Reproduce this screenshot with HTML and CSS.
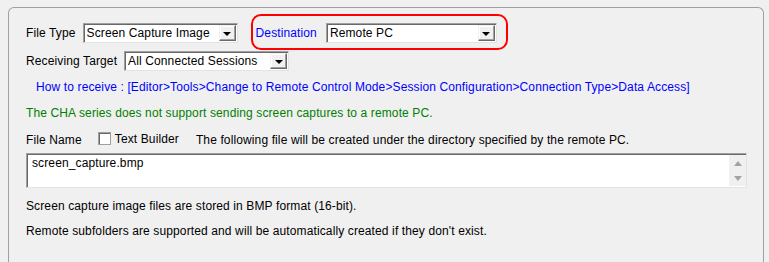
FILE: index.html
```html
<!DOCTYPE html>
<html>
<head>
<meta charset="utf-8">
<link rel="stylesheet" href="styles.css">
</head>
<body>
<div class="group">
  <div class="row row1">
    <div class="left1">
      <span class="label">File Type</span>
      <div class="combo combo-type"><span class="ctext">Screen Capture Image</span><span class="btn"><i class="tri"></i></span></div>
    </div>
    <div class="highlight">
      <span class="label blue">Destination</span>
      <div class="combo combo-dest"><span class="ctext">Remote PC</span><span class="btn"><i class="tri"></i></span></div>
    </div>
  </div>
  <div class="row row2">
    <span class="label">Receiving Target</span>
    <div class="combo combo-target"><span class="ctext">All Connected Sessions</span><span class="btn"><i class="tri"></i></span></div>
  </div>
  <p class="howto">How to receive : [Editor&gt;Tools&gt;Change to Remote Control Mode&gt;Session Configuration&gt;Connection Type&gt;Data Access]</p>
  <p class="green">The CHA series does not support sending screen captures to a remote PC.</p>
  <div class="row row3">
    <span class="label">File Name</span>
    <span class="check"></span>
    <span class="label tb">Text Builder</span>
    <span class="label desc">The following file will be created under the directory specified by the remote PC.</span>
  </div>
  <div class="textarea">
    <span class="tatext">screen_capture.bmp</span>
    <div class="scroll"><i class="up"></i><i class="down"></i></div>
  </div>
  <p class="note n1">Screen capture image files are stored in BMP format (16-bit).</p>
  <p class="note n2">Remote subfolders are supported and will be automatically created if they don't exist.</p>
</div>
</body>
</html>
```
FILE: styles.css
```css
html, body {
  margin: 0;
  padding: 0;
  background: #f0f0f0;
  font-family: "Liberation Sans", Arial, sans-serif;
  font-size: 12px;
  letter-spacing: 0.12px;
  color: #000;
  overflow: hidden;
}
.group {
  margin: 7px 5px 0 8px;
  height: 255px;
  border: 1px solid #a0a0a0;
  border-bottom: none;
  border-radius: 6px 6px 0 0;
  box-sizing: border-box;
  padding: 6px 0 0 17px;
  overflow: hidden;
}
.row {
  display: flex;
  align-items: center;
}
.label {
  line-height: 14px;
  white-space: nowrap;
}
.blue { color: #0000ff; }
.row1 { align-items: flex-start; }
.left1 {
  display: flex;
  align-items: center;
  margin-top: 9px;
}
.combo {
  box-sizing: border-box;
  height: 20px;
  background: #fff;
  border: 1px solid;
  border-color: #a0a0a0 #e3e3e3 #e3e3e3 #a0a0a0;
  box-shadow: inset 1px 1px 0 #696969;
  display: flex;
  align-items: center;
}
.ctext {
  flex: 1;
  padding-left: 3px;
  line-height: 14px;
  white-space: nowrap;
  overflow: hidden;
}
.btn {
  box-sizing: border-box;
  width: 17px;
  height: 16px;
  margin: 1px 1px 1px 0;
  background: #f0f0f0;
  border: 1px solid;
  border-color: #f0f0f0 #696969 #696969 #f0f0f0;
  box-shadow: inset -1px -1px 0 #a0a0a0, inset 1px 1px 0 #fff;
  display: flex;
  align-items: center;
  justify-content: center;
}
.tri {
  width: 0;
  height: 0;
  border-left: 4px solid transparent;
  border-right: 4px solid transparent;
  border-top: 4px solid #000;
  margin-top: 1px;
}
.combo-type { width: 155px; margin-left: 7px; }
.highlight {
  margin-left: 13px;
  box-sizing: border-box;
  height: 36px;
  border: 2px solid #ff0000;
  border-radius: 10px;
  padding: 7px 9px 0 3px;
  display: flex;
  align-items: flex-start;
}
.highlight .label { margin-top: 3px; }
.combo-dest { width: 171px; margin-left: 9px; }
.row2 { margin-top: 1px; }
.combo-target { width: 165px; margin-left: 7px; }
p { margin: 0; line-height: 14px; white-space: nowrap; }
.howto { color: #0000ff; margin: 9px 0 0 10px; }
.green { color: #008000; margin-top: 12px; }
.row3 { margin-top: 13px; height: 14px; }
.check {
  box-sizing: border-box;
  width: 13px;
  height: 13px;
  border: 1px solid #a0a0a0;
  box-shadow: inset 1px 1px 0 #696969;
  background: #fff;
  margin-left: 16px;
  margin-top: -4px;
}
.tb { margin-left: 4px; margin-top: -3px; }
.desc { margin-left: 17px; }
.textarea {
  box-sizing: border-box;
  margin-top: 6px;
  width: 721px;
  height: 35px;
  background: #fff;
  border: 1px solid;
  border-color: #a0a0a0 #e3e3e3 #e3e3e3 #a0a0a0;
  box-shadow: inset 1px 1px 0 #696969;
  display: flex;
  justify-content: space-between;
}
.tatext {
  padding: 2px 0 0 5px;
  line-height: 14px;
}
.scroll {
  width: 17px;
  margin: 1px 0;
  background: #f0f0f0;
  display: flex;
  flex-direction: column;
  align-items: center;
  justify-content: space-between;
  padding: 6px 0 5px;
  box-sizing: border-box;
}
.up, .down {
  width: 0;
  height: 0;
  border-left: 4px solid transparent;
  border-right: 4px solid transparent;
}
.up { border-bottom: 5px solid #a3a3a3; }
.down { border-top: 5px solid #a3a3a3; }
.n1 { margin-top: 11px; }
.n2 { margin-top: 11px; }
```
